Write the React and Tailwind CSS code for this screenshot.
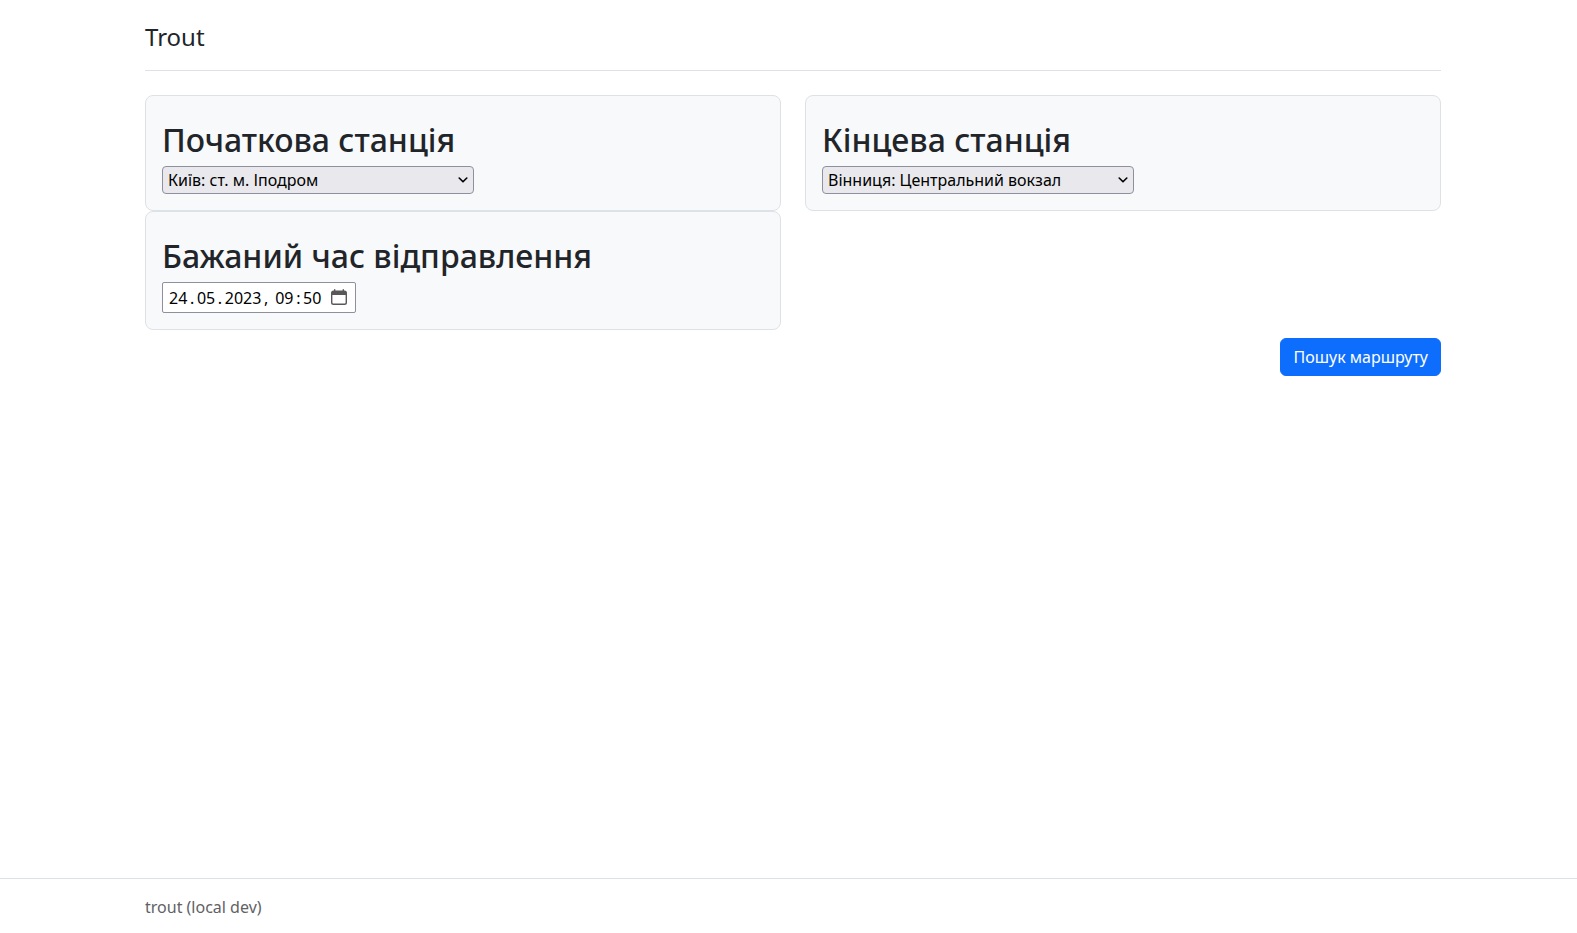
import { useState } from "react";

function Card({ title, htmlFor, children }) {
  return (
    <section className="rounded-lg border border-[#dee2e6] bg-[#f8f9fa] px-4 pt-6 pb-4">
      <h2 className="mb-1.5 text-[32px] leading-10 font-medium">
        <label htmlFor={htmlFor}>{title}</label>
      </h2>
      {children}
    </section>
  );
}

function StationSelect({ id, value, onChange, stations }) {
  return (
    <div className="grid w-[312px] max-w-full items-center">
      <select
        id={id}
        value={value}
        onChange={(e) => onChange(e.target.value)}
        className="col-start-1 row-start-1 h-7 w-full appearance-none rounded-[4px] border border-[#8f8f9d] bg-[#e9e9ed] pr-6 pl-[5px] text-base text-black"
      >
        {stations.map((s) => (
          <option key={s}>{s}</option>
        ))}
      </select>
      <svg
        viewBox="0 0 10 6"
        aria-hidden="true"
        className="pointer-events-none col-start-1 row-start-1 mr-[6px] h-[6px] w-[10px] justify-self-end"
      >
        <path d="M1.2 1 5 4.8 8.8 1" fill="none" stroke="#000" strokeWidth="1.6" strokeLinecap="round" strokeLinejoin="round" />
      </svg>
    </div>
  );
}

const STATIONS = ["Київ: ст. м. Іподром", "Вінниця: Центральний вокзал"];

export default function App() {
  const [from, setFrom] = useState(STATIONS[0]);
  const [to, setTo] = useState(STATIONS[1]);
  const [time, setTime] = useState("24\u2009.\u200905\u2009.\u20092023\u2009,\u2009 09\u2009:\u200950");

  return (
    <div className="flex min-h-screen flex-col bg-white font-['Noto_Sans',sans-serif] text-base text-[#212529]">
      <div className="grow pl-[9px]">
        <div className="mx-auto max-w-[1320px] px-3">
          <header className="mb-6 border-b border-[#dee2e6] pt-5 pb-4">
            <a href="#" className="block text-2xl leading-[34px]">
              Trout
            </a>
          </header>
          <main>
            <form onSubmit={(e) => e.preventDefault()}>
              <div className="grid grid-cols-1 gap-x-6 md:grid-cols-2">
                <Card title="Початкова станція" htmlFor="from">
                  <StationSelect id="from" value={from} onChange={setFrom} stations={STATIONS} />
                </Card>
                <Card title="Кінцева станція" htmlFor="to">
                  <StationSelect id="to" value={to} onChange={setTo} stations={STATIONS} />
                </Card>
                <Card title="Бажаний час відправлення" htmlFor="time">
                  <div className="flex h-[31px] w-[194px] items-center rounded-[2px] border border-[#8f8f9d] bg-white pr-2 pl-1.5 text-black">
                    <input
                      id="time"
                      type="text"
                      value={time}
                      onChange={(e) => setTime(e.target.value)}
                      className="w-full min-w-0 bg-transparent outline-none"
                    />
                    <button type="button" aria-label="Календар" className="shrink-0 pb-px">
                      <svg viewBox="0 0 16 16" className="block size-4">
                        <path
                          fill="#58585b"
                          fillRule="evenodd"
                          d="M13.5 1.5H13V.7a.7.7 0 0 0-1.4 0v.8H4.4V.7A.7.7 0 0 0 3 .7v.8h-.5A2.5 2.5 0 0 0 0 4v9.5A2.5 2.5 0 0 0 2.5 16h11a2.5 2.5 0 0 0 2.5-2.5V4a2.5 2.5 0 0 0-2.5-2.5zM14.6 13.5c0 .6-.5 1.1-1.1 1.1h-11c-.6 0-1.1-.5-1.1-1.1V6h13.2z"
                        />
                      </svg>
                    </button>
                  </div>
                </Card>
              </div>
              <div className="mt-2 flex justify-end">
                <button type="submit" className="rounded-md border border-[#0d6efd] bg-[#0d6efd] px-3 py-[6px] leading-6 text-white">
                  Пошук маршруту
                </button>
              </div>
            </form>
          </main>
        </div>
      </div>
      <footer className="border-t border-[#dee2e6] pt-4 pb-[14px] pl-[9px]">
        <p className="mx-auto max-w-[1320px] px-3 leading-6 text-[#5f6265]">trout (local dev)</p>
      </footer>
    </div>
  );
}
